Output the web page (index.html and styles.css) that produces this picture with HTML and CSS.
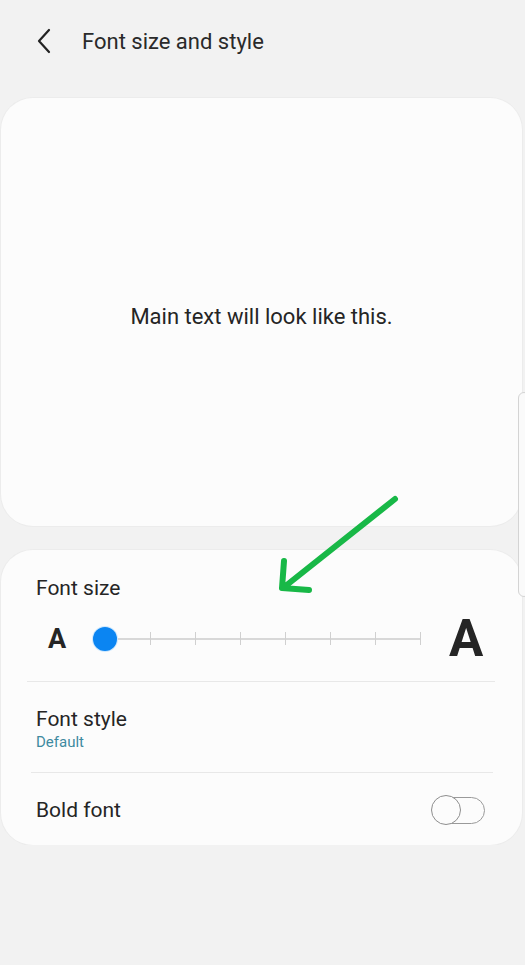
FILE: index.html
```html
<!DOCTYPE html>
<html lang="en">
<head>
    <meta charset="UTF-8">
    <title>Font size and style</title>
    <link rel="stylesheet" href="styles.css">
</head>
<body>
<div class="header">
    <svg class="back" width="20" height="28" viewBox="0 0 20 28">
        <path d="M14 3 L4 14 L14 25" fill="none" stroke="#222" stroke-width="2.2" stroke-linecap="round" stroke-linejoin="round"/>
    </svg>
    <h1>Font size and style</h1>
</div>
<div class="card preview">
    <p>Main text will look like this.</p>
</div>
<div class="card settings">
    <div class="size">
        <div class="label">Font size</div>
        <div class="slider">
            <span class="a-small">A</span>
            <div class="track">
                <span class="tick"></span><span class="tick"></span><span class="tick"></span><span class="tick"></span>
                <span class="tick"></span><span class="tick"></span><span class="tick"></span><span class="tick"></span>
                <span class="thumb"></span>
            </div>
            <span class="a-big">A</span>
        </div>
    </div>
    <div class="row style">
        <div class="label">Font style</div>
        <div class="sub">Default</div>
    </div>
    <div class="row bold">
        <div class="label">Bold font</div>
        <div class="switch"><span class="knob"></span></div>
    </div>
</div>
<div class="scroll"></div>
<svg class="arrow" width="525" height="965" viewBox="0 0 525 965">
    <path d="M395 499 L283 588 M284 561 L282 588 L309 590" fill="none" stroke="#18b847" stroke-width="6" stroke-linecap="round" stroke-linejoin="round"/>
</svg>
</body>
</html>
```
FILE: styles.css
```css
body {
    margin: 0;
    background: #f2f2f2;
    font-family: Roboto, "Liberation Sans", sans-serif;
    color: #252525;
}
.header {
    display: flex;
    align-items: center;
    height: 98px;
    padding-left: 35px;
    box-sizing: border-box;
    padding-bottom: 16px;
}
.header h1 {
    margin: 0 0 0 27px;
    font-size: 22px;
    font-weight: 400;
    color: #2a2a2a;
}
.card {
    margin: 0 3px 0 1px;
    background: #fcfcfc;
    border-radius: 32px;
    box-shadow: 0 0 0 1px #ececec;
}
.preview {
    height: 428px;
    display: flex;
    align-items: center;
    justify-content: center;
}
.preview p {
    margin: 8px 0 0;
    font-size: 22px;
}
.settings {
    margin-top: 24px;
    height: 295px;
    padding: 0 27px 0 26px;
    display: flex;
    flex-direction: column;
}
.label {
    font-size: 21px;
}
.size {
    height: 132px;
    padding: 26px 0 0 9px;
    box-sizing: border-box;
    border-bottom: 1px solid #e8e8e8;
}
.slider {
    display: flex;
    align-items: center;
    margin-top: 13px;
}
.a-small {
    font-size: 27px;
    font-weight: 700;
    width: 57px;
    margin-left: 12px;
}
.a-big {
    font-size: 51px;
    font-weight: 700;
    margin-left: 28px;
    line-height: 1;
}
.track {
    position: relative;
    width: 316px;
    height: 2px;
    background: #d8d8d8;
    display: flex;
    justify-content: space-between;
    align-items: center;
}
.tick {
    width: 1px;
    height: 13px;
    background: #d0d0d0;
}
.tick:first-child {
    visibility: hidden;
}
.thumb {
    position: absolute;
    left: -12px;
    top: -11px;
    width: 24px;
    height: 24px;
    border-radius: 50%;
    background: #0b85f2;
    box-shadow: 0 0 0 1px #cfe8fd;
}
.row {
    height: 91px;
    padding-left: 9px;
    box-sizing: border-box;
}
.style {
    padding-top: 25px;
    border-bottom: 1px solid #e8e8e8;
    margin: 0 2px 0 4px;
    padding-left: 5px;
}
.sub {
    font-size: 15px;
    color: #3e8aa0;
    margin-top: 2px;
}
.bold {
    display: flex;
    align-items: center;
    justify-content: space-between;
    height: 72px;
    padding-right: 10px;
    padding-top: 2px;
}
.switch {
    position: relative;
    width: 48px;
    height: 27px;
    border: 1.5px solid #9a9a9a;
    border-radius: 15px;
    box-sizing: border-box;
}
.knob {
    position: absolute;
    left: -7px;
    top: -3px;
    width: 30px;
    height: 30px;
    border-radius: 50%;
    border: 1.5px solid #8e8e8e;
    background: #fcfcfc;
    box-sizing: border-box;
}
.scroll {
    position: absolute;
    left: 518px;
    top: 392px;
    width: 10px;
    height: 203px;
    border: 1px solid #d4d4d4;
    border-radius: 6px;
    background: #fafafa;
}
.arrow {
    position: absolute;
    left: 0;
    top: 0;
    pointer-events: none;
}
```
